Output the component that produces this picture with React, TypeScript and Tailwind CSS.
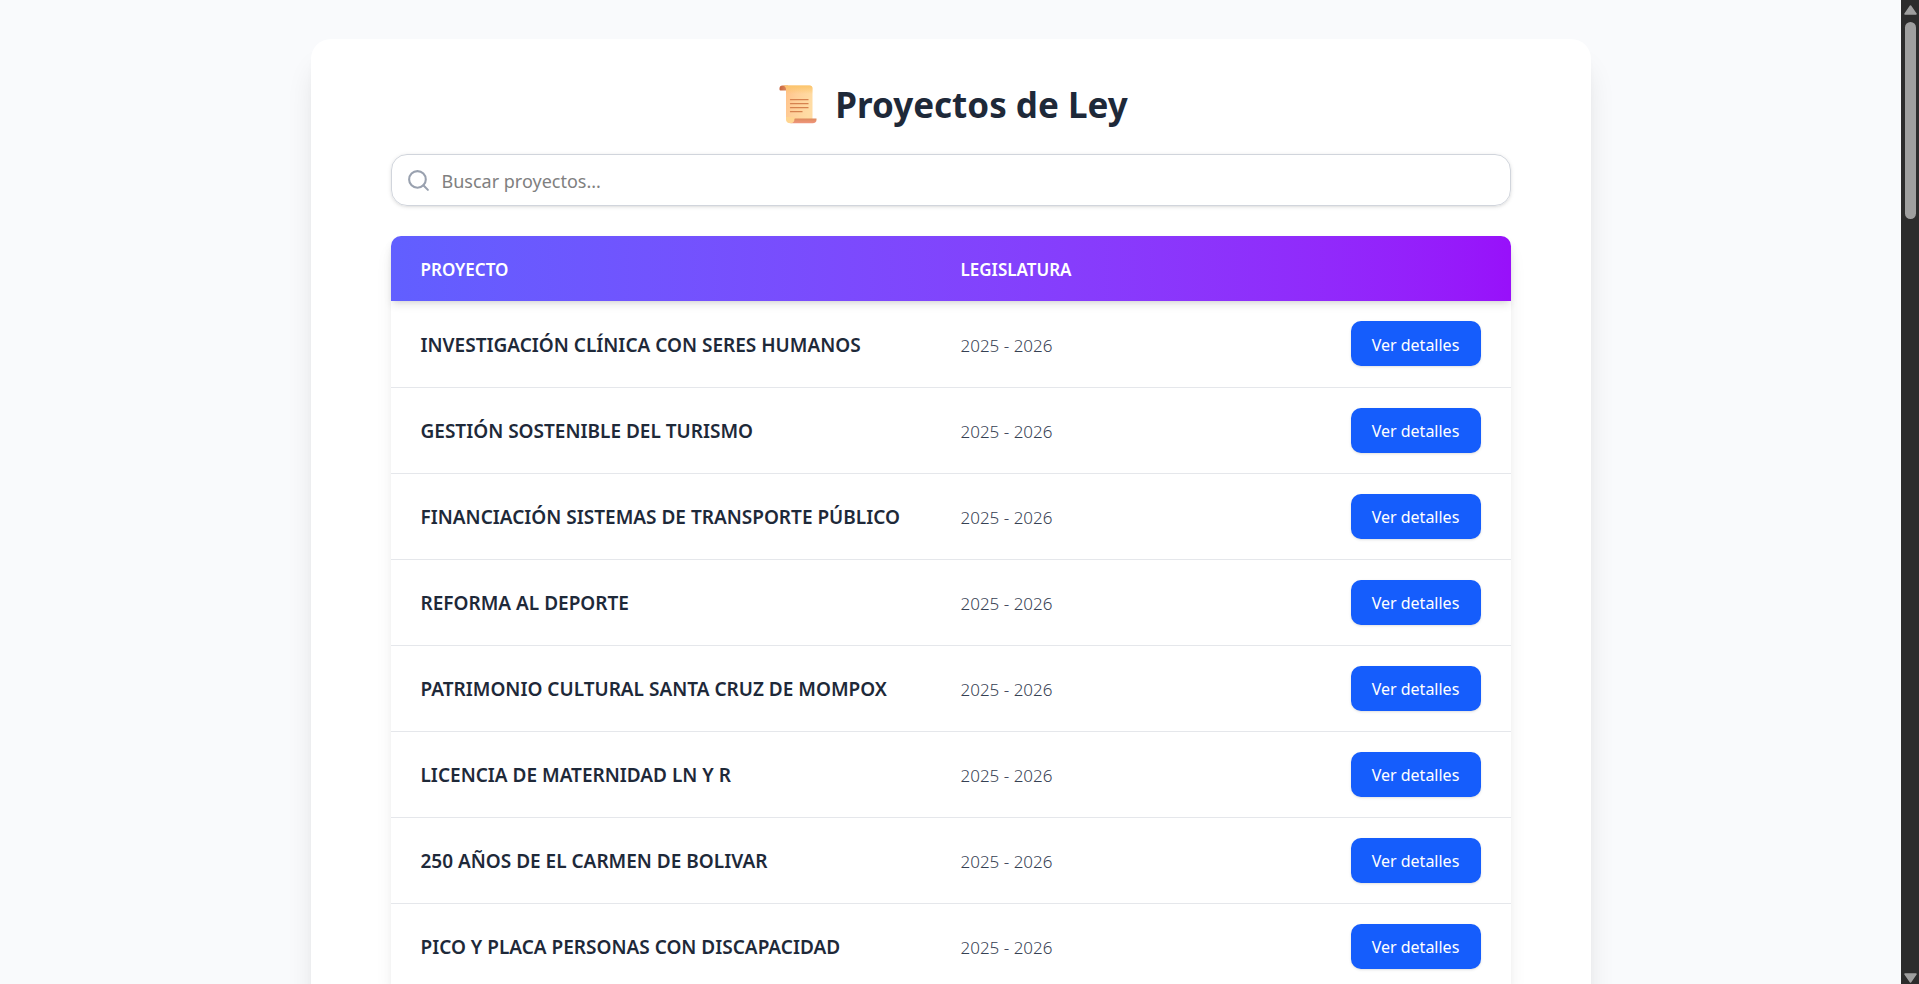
import React from "react";
import { Search } from "lucide-react";

const proyectos = [
  "INVESTIGACIÓN CLÍNICA CON SERES HUMANOS",
  "GESTIÓN SOSTENIBLE DEL TURISMO",
  "FINANCIACIÓN SISTEMAS DE TRANSPORTE PÚBLICO",
  "REFORMA AL DEPORTE",
  "PATRIMONIO CULTURAL SANTA CRUZ DE MOMPOX",
  "LICENCIA DE MATERNIDAD LN Y R",
  "250 AÑOS DE EL CARMEN DE BOLIVAR",
  "PICO Y PLACA PERSONAS CON DISCAPACIDAD",
];

function Scroll() {
  return (
    <svg viewBox="-6 0 44 39" className="h-[39px] w-[44px]" aria-hidden="true">
      <defs>
        <linearGradient id="paper" x1="0" y1="0" x2="1" y2="0.3">
          <stop offset="0" stopColor="#ffbd85" />
          <stop offset="0.5" stopColor="#ffd09a" />
          <stop offset="1" stopColor="#ffdca4" />
        </linearGradient>
        <linearGradient id="paperTop" x1="0" y1="0" x2="0" y2="1">
          <stop offset="0" stopColor="#fbc56b" />
          <stop offset="1" stopColor="#fbc56b" stopOpacity="0" />
        </linearGradient>
        <linearGradient id="curl" x1="0" y1="0" x2="1" y2="0">
          <stop offset="0" stopColor="#c9643c" />
          <stop offset="1" stopColor="#e09064" />
        </linearGradient>
        <linearGradient id="roll" x1="0" y1="0" x2="0" y2="1">
          <stop offset="0" stopColor="#dd8a5c" />
          <stop offset="1" stopColor="#f0967e" />
        </linearGradient>
      </defs>
      <path d="M3.5 0.5H9V5.5H1.5Q0.5 5.5 0.5 4.5V3.5Q0.5 0.5 3.5 0.5Z" fill="url(#curl)" />
      <path d="M4 0.5H30.5Q33.5 0.5 33.5 3.5V37H11Q7 37 7 33V4Q7 1 4 0.5Z" fill="url(#paper)" />
      <path d="M4 0.5H30.5Q33.5 0.5 33.5 3.5V9H7V4Q7 1 4 0.5Z" fill="url(#paperTop)" />
      <path d="M15.5 33.5H37.5V34.5Q37.5 38.3 33.5 38.3H11.5Z" fill="url(#roll)" />
      <path d="M7 32V34Q7 38.3 11.5 38.3Q15.5 38.3 15.5 33.5V32Z" fill="#ffd591" />
      <path d="M11.5 14.7H29M11.5 18.7H29M11.5 22.7H29M11.5 26.7H23" stroke="#d6824f" strokeWidth="1.3" strokeLinecap="round" />
    </svg>
  );
}

function ScrollBar() {
  return (
    <div className="flex w-[18px] shrink-0 flex-col items-center justify-between bg-[#2c2c2c] pt-[5px] pb-px" aria-hidden="true">
      <div className="flex flex-col items-center gap-[7px]">
        <svg viewBox="0 0 13 10" className="h-[10px] w-[13px]">
          <path d="M6.5 1L12 9H1Z" fill="#9f9f9f" stroke="#9f9f9f" strokeWidth="1.5" strokeLinejoin="round" />
        </svg>
        <div className="h-[197px] w-[11px] rounded-full bg-[#9f9f9f]" />
      </div>
      <svg viewBox="0 0 13 10" className="h-[10px] w-[13px]">
        <path d="M6.5 9L12 1H1Z" fill="#9f9f9f" stroke="#9f9f9f" strokeWidth="1.5" strokeLinejoin="round" />
      </svg>
    </div>
  );
}

export default function App() {
  return (
    <div className="flex h-screen overflow-hidden bg-[#f9fafb] font-['Noto_Sans',sans-serif] text-gray-800">
      <main className="min-w-0 flex-1 overflow-hidden bg-[#f9fafc] px-4 pt-[39px]">
        <section className="mx-auto max-w-7xl rounded-[20px] bg-white px-20 pt-10 pb-10 shadow-[0_25px_31px_-6px_rgb(0_0_0/0.12),0_10px_13px_-8px_rgb(0_0_0/0.1)]">
          <h1 className="flex items-center justify-center gap-[18px] text-[35px] leading-[51px] font-bold">
            <Scroll />
            Proyectos de Ley
          </h1>

          <div className="mt-6 flex h-[52px] items-center gap-[11px] rounded-2xl border border-gray-300 px-[14px] shadow-[0_1px_4px_rgb(0_0_0/0.1),0_1px_3px_-1px_rgb(0_0_0/0.1)]">
            <Search className="size-[25px] text-gray-400" aria-hidden="true" />
            <input
              type="search"
              aria-label="Buscar proyectos"
              placeholder="Buscar proyectos..."
              className="min-w-0 flex-1 bg-transparent pt-0.5 text-[18px] outline-none placeholder:text-[#808080]"
            />
          </div>

          <div className="mt-[30px] rounded-t-[10px] shadow-[0_12px_19px_-4px_rgb(0_0_0/0.1),0_5px_8px_-5px_rgb(0_0_0/0.1)]">
            <table className="w-full table-fixed text-left" aria-label="Proyectos de ley">
              <thead className="rounded-t-[10px] bg-linear-to-r from-[#615fff] to-[#9810fa] text-[17px] text-white shadow-[0_5px_8px_-1px_rgb(0_0_0/0.1),0_3px_5px_-3px_rgb(0_0_0/0.1)]">
                <tr className="h-[65px]">
                  <th scope="col" className="w-[540px] rounded-tl-[10px] px-[30px] pt-0.5 font-semibold">PROYECTO</th>
                  <th scope="col" className="px-[30px] pt-0.5 font-semibold">LEGISLATURA</th>
                  <td className="rounded-tr-[10px] px-[30px]" />
                </tr>
              </thead>
              <tbody>
                {proyectos.map((nombre) => (
                  <tr key={nombre} className="h-[86px] border-b border-gray-200">
                    <td className="pt-[3px] pl-[30px] text-[19px] font-semibold whitespace-nowrap">{nombre}</td>
                    <td className="px-[30px] pt-[3px] text-[17px] font-light text-gray-700">2025 - 2026</td>
                    <td className="px-[30px] text-right">
                      <button type="button" className="h-[45px] w-[130px] rounded-[10px] bg-[#155dfc] pt-0.5 text-[16px] text-white shadow-sm">
                        Ver detalles
                      </button>
                    </td>
                  </tr>
                ))}
              </tbody>
            </table>
          </div>
        </section>
      </main>
      <ScrollBar />
    </div>
  );
}
